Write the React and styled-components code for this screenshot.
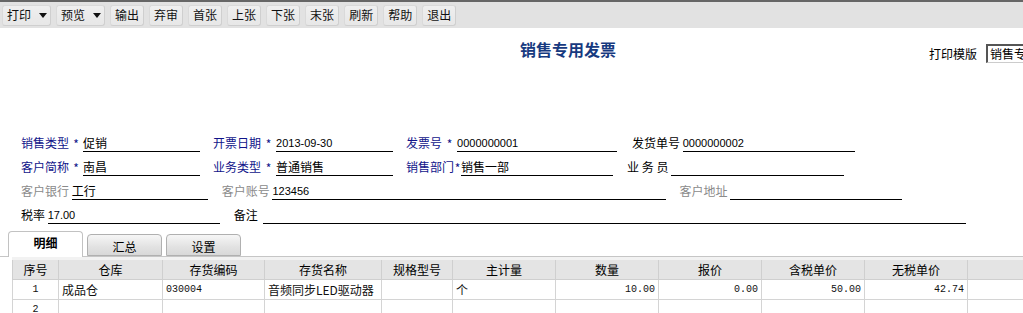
import React from "react";
import styled, { createGlobalStyle } from "styled-components";

const Global = createGlobalStyle`
  html, body { margin: 0; padding: 0; background: #fff; overflow: hidden; }
  body { font-family: "Noto Sans CJK SC", "Noto Sans", sans-serif; font-size: 12px; color: #000; }
`;

const Page = styled.div`
  width: 1023px;
  height: 313px;
  overflow: hidden;
  position: relative;
`;

const Toolbar = styled.div`
  height: 26px;
  border-top: 2px solid #666;
  background: #e2e2e2;
  display: flex;
  align-items: center;
  padding-left: 2px;
  gap: 5px;
`;

const TButton = styled.div`
  height: 21px;
  box-sizing: border-box;
  padding: ${(p) => (p.$menu ? "0 3px 0 4px" : "0 4px")};
  display: flex;
  align-items: center;
  gap: 8px;
  border-radius: 3px;
  border: 1px solid #dadada;
  border-right-color: #cfcfcf;
  border-bottom-color: #cfcfcf;
  background: linear-gradient(#efefef, #e7e7e7);
  font-size: 12px;
  line-height: 12px;
  color: #111;
  white-space: nowrap;
`;

const Caret = styled.span`
  width: 0;
  height: 0;
  border-left: 4px solid transparent;
  border-right: 4px solid transparent;
  border-top: 5px solid #111;
`;

const Header = styled.div`
  display: flex;
  align-items: flex-start;
  height: 100px;
`;

const Title = styled.div`
  margin-left: 520px;
  margin-top: 11px;
  font-size: 16px;
  font-weight: bold;
  color: #173a80;
  line-height: 20px;
  flex-shrink: 0;
`;

const Tpl = styled.div`
  margin-left: 313px;
  margin-top: 16px;
  display: flex;
  align-items: center;
  flex-shrink: 0;
`;

const TplLabel = styled.span`
  font-size: 12px;
  width: 57px;
`;

const TplInput = styled.div`
  width: 90px;
  height: 19px;
  box-sizing: border-box;
  border-top: 2px solid #555;
  border-left: 2px solid #555;
  border-bottom: 1px solid #ccc;
  background: #fff;
  padding-left: 2px;
  font-size: 12px;
  line-height: 16px;
  white-space: nowrap;
`;

const Form = styled.div`
  display: flex;
  flex-direction: column;
`;

const Row = styled.div`
  height: 24px;
  display: flex;
  align-items: flex-end;
  padding-left: 21px;
`;

const Field = styled.div`
  display: flex;
  align-items: flex-end;
  margin-left: ${(p) => p.$gap || 0}px;
  flex-shrink: 0;
`;

const Label = styled.span`
  font-size: 12px;
  line-height: 16px;
  padding-bottom: 1px;
  white-space: pre;
  color: ${(p) =>
    p.$tone === "blue" ? "#10148a" : p.$tone === "gray" ? "#8a8a8a" : "#000"};
`;

const Star = styled.span`
  width: ${(p) => p.$w}px;
  text-align: center;
  color: #10148a;
  font-size: 12px;
  line-height: 14px;
  padding-bottom: 1px;
`;

const Value = styled.div`
  width: ${(p) => p.$w}px;
  border-bottom: 1px solid #000;
  line-height: 16px;
  height: 16px;
  white-space: nowrap;
  font-family: ${(p) =>
    p.$num ? '"Liberation Sans", Arial, sans-serif' : 'inherit'};
  font-size: ${(p) => (p.$num ? "11px" : "12px")};
`;

const Tabs = styled.div`
  margin-top: 7px;
  height: 25px;
  display: flex;
  align-items: flex-end;
  padding-left: 8px;
  gap: 4px;
  border-bottom: 1px solid #c6c6c6;
`;

const Tab = styled.div`
  box-sizing: border-box;
  width: 75px;
  height: ${(p) => (p.$active ? 26 : 22)}px;
  margin-bottom: ${(p) => (p.$active ? -1 : 0)}px;
  border: 1px solid ${(p) => (p.$active ? "#c2c2c2" : "#b0b0b0")};
  border-bottom: ${(p) => (p.$active ? "none" : "1px solid #b0b0b0")};
  border-radius: 4px 4px 0 0;
  background: ${(p) =>
    p.$active ? "#fff" : "linear-gradient(#f6f6f6, #e2e2e2 60%, #d8d8d8)"};
  font-size: 12px;
  font-weight: ${(p) => (p.$active ? "bold" : "normal")};
  text-align: center;
  line-height: 22px;
  padding-top: ${(p) => (p.$active ? 0 : 1)}px;
`;

const GridWrap = styled.div`
  margin-left: 12px;
  padding-top: 3px;
  background: #f2f2f2;
`;

const Table = styled.table`
  border-collapse: collapse;
  table-layout: fixed;
  width: 1011px;
  background: #fff;
`;

const Th = styled.th`
  height: 19px;
  padding: 0;
  background: #e4e4e4;
  border: 1px solid #cfcfcf;
  border-top: none;
  font-weight: normal;
  font-size: 12px;
  text-align: center;
  line-height: 18px;
  white-space: nowrap;
  overflow: hidden;
`;

const Td = styled.td`
  height: 19px;
  padding: 0 3px;
  border: 1px solid #d4d4d4;
  line-height: 18px;
  white-space: nowrap;
  overflow: hidden;
  text-align: ${(p) => p.$align || "left"};
  font-family: ${(p) =>
    p.$mono ? '"Liberation Mono", "DejaVu Sans Mono", monospace' : 'inherit'};
  font-size: ${(p) => (p.$mono ? "10px" : "12px")};
  color: #111;
  &:last-child { border-right: none; }
`;

const cols = [46, 104, 102, 117, 71, 103, 103, 103, 103, 103, 56];
const heads = ["序号", "仓库", "存货编码", "存货名称", "规格型号", "主计量", "数量", "报价", "含税单价", "无税单价", ""];

const toolButtons = ["输出", "弃审", "首张", "上张", "下张", "末张", "刷新", "帮助", "退出"];

export default function App() {
  return (
    <Page>
      <Global />
      <Toolbar>
        <TButton $menu>打印<Caret /></TButton>
        <TButton $menu>预览<Caret /></TButton>
        {toolButtons.map((b) => (
          <TButton key={b}>{b}</TButton>
        ))}
      </Toolbar>

      <Header>
        <Title>销售专用发票</Title>
        <Tpl>
          <TplLabel>打印模版</TplLabel>
          <TplInput>销售专用发票打印模版</TplInput>
        </Tpl>
      </Header>

      <Form>
        <Row>
          <Field>
            <Label $tone="blue">销售类型</Label>
            <Star $w={14}>*</Star>
            <Value $w={117}>促销</Value>
          </Field>
          <Field $gap={13}>
            <Label $tone="blue">开票日期</Label>
            <Star $w={15}>*</Star>
            <Value $w={117} $num>2013-09-30</Value>
          </Field>
          <Field $gap={13}>
            <Label $tone="blue">发票号</Label>
            <Star $w={15}>*</Star>
            <Value $w={160} $num>0000000001</Value>
          </Field>
          <Field $gap={15}>
            <Label>发货单号 </Label>
            <Value $w={172} $num>0000000002</Value>
          </Field>
        </Row>
        <Row>
          <Field>
            <Label $tone="blue">客户简称</Label>
            <Star $w={14}>*</Star>
            <Value $w={117}>南昌</Value>
          </Field>
          <Field $gap={13}>
            <Label $tone="blue">业务类型</Label>
            <Star $w={15}>*</Star>
            <Value $w={117}>普通销售</Value>
          </Field>
          <Field $gap={13}>
            <Label $tone="blue">销售部门</Label>
            <Star $w={7}>*</Star>
            <Value $w={152}>销售一部</Value>
          </Field>
          <Field $gap={14}>
            <Label>{"业 务 员 "}</Label>
            <Value $w={173}></Value>
          </Field>
        </Row>
        <Row>
          <Field>
            <Label $tone="gray">客户银行 </Label>
            <Value $w={136}>工行</Value>
          </Field>
          <Field $gap={14}>
            <Label $tone="gray">客户账号 </Label>
            <Value $w={394} $num>123456</Value>
          </Field>
          <Field $gap={13}>
            <Label $tone="gray">客户地址 </Label>
            <Value $w={172}></Value>
          </Field>
        </Row>
        <Row>
          <Field>
            <Label>税率 </Label>
            <Value $w={172} $num>17.00</Value>
          </Field>
          <Field $gap={14}>
            <Label>{"备注  "}</Label>
            <Value $w={703}></Value>
          </Field>
        </Row>
      </Form>

      <Tabs>
        <Tab $active>明细</Tab>
        <Tab>汇总</Tab>
        <Tab>设置</Tab>
      </Tabs>

      <GridWrap>
        <Table>
          <colgroup>
            {cols.map((w, i) => (
              <col key={i} style={{ width: w }} />
            ))}
          </colgroup>
          <thead>
            <tr>
              {heads.map((h, i) => (
                <Th key={i}>{h}</Th>
              ))}
            </tr>
          </thead>
          <tbody>
            <tr>
              <Td $align="center" $mono>1</Td>
              <Td>成品仓</Td>
              <Td $mono>030004</Td>
              <Td>音频同步LED驱动器</Td>
              <Td></Td>
              <Td>个</Td>
              <Td $align="right" $mono>10.00</Td>
              <Td $align="right" $mono>0.00</Td>
              <Td $align="right" $mono>50.00</Td>
              <Td $align="right" $mono>42.74</Td>
              <Td></Td>
            </tr>
            <tr>
              <Td $align="center" $mono>2</Td>
              <Td></Td>
              <Td></Td>
              <Td></Td>
              <Td></Td>
              <Td></Td>
              <Td></Td>
              <Td></Td>
              <Td></Td>
              <Td></Td>
              <Td></Td>
            </tr>
          </tbody>
        </Table>
      </GridWrap>
    </Page>
  );
}
